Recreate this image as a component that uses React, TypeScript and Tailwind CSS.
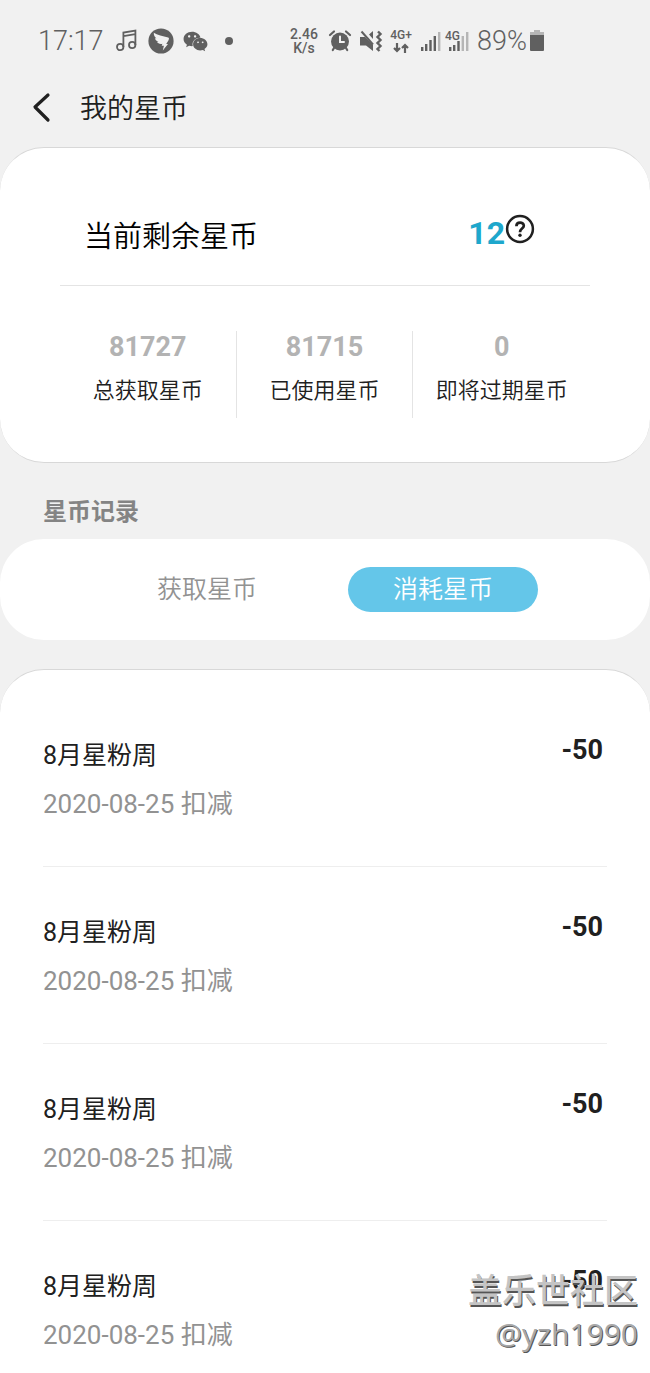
import { useState } from 'react';
import { FaWeixin } from 'react-icons/fa';

type TabId = 'earned' | 'spent';

const TABS: { id: TabId; label: string }[] = [
  { id: 'earned', label: '获取星币' },
  { id: 'spent', label: '消耗星币' }
];

const STATS = [
  { label: '总获取星币', value: 81727 },
  { label: '已使用星币', value: 81715 },
  { label: '即将过期星币', value: 0 }
];

const RECORDS = [
  { id: 1, title: '8月星粉周', date: '2020-08-25', amount: -50 },
  { id: 2, title: '8月星粉周', date: '2020-08-25', amount: -50 },
  { id: 3, title: '8月星粉周', date: '2020-08-25', amount: -50 },
  { id: 4, title: '8月星粉周', date: '2020-08-25', amount: -50 }
];

function MusicIcon() {
  return (
    <svg className="h-6 w-6" viewBox="0 0 24 24" fill="none" stroke="currentColor" strokeWidth="1.8">
      <circle cx="5.2" cy="18" r="3.2" />
      <circle cx="17.2" cy="16" r="3.2" />
      <path d="M8.4 18V3.5L20.4 1.5V16M8.4 7.2L20.4 5.2" />
    </svg>
  );
}

function WingIcon() {
  return (
    <svg className="h-[26px] w-[26px]" viewBox="0 0 26 26">
      <circle cx="13" cy="13" r="12.6" fill="currentColor" />
      <path
        d="M5.8 4.8C9 7 15 8.3 20.2 9.4C21.4 9.8 21 11.2 20.4 12.4L18.2 16.1H20L14.8 22.5L15.9 17.8H13.7L14.4 15.8C12 16.5 9.8 15.5 9 13.8L10.5 13.6C8.5 13 7.4 12 7 10.2L8.4 10.2C6.6 9 5.7 7.2 5.8 4.8Z"
        fill="#f1f1f1"
      />
    </svg>
  );
}

function AlarmIcon() {
  return (
    <svg className="h-6 w-6" viewBox="0 0 24 24" fill="none" stroke="currentColor" strokeLinecap="round">
      <circle cx="12" cy="12.5" r="9" fill="currentColor" stroke="none" />
      <path d="M2 6L6 2.5M22 6L18 2.5M6 19L4.8 21M18 19L19.2 21" strokeWidth="2.2" />
      <path d="M12 7.5V13H16" stroke="#f1f1f1" strokeWidth="2" />
    </svg>
  );
}

function VibrateIcon() {
  return (
    <svg className="h-6 w-6" viewBox="0 0 24 24" fill="none" stroke="currentColor">
      <path d="M1 8H6L14 16V22L7 16.5H1ZM10 5.5L14 2V10Z" fill="currentColor" stroke="none" />
      <path d="M2.5 2.5L14 15.5" strokeWidth="2" />
      <path d="M19 2.5L21.5 5L18.5 8L21.5 11L18.5 14L21.5 17L18.5 20L20.5 22" strokeWidth="2.4" />
    </svg>
  );
}

function DataArrowsIcon() {
  return (
    <svg className="h-[10px] w-4" viewBox="0 0 16 10" fill="none" stroke="currentColor" strokeWidth="2.2">
      <path d="M4 0V8M1 5L4 8L7 5M12 10V2M9 5L12 2L15 5" />
    </svg>
  );
}

function SignalIcon() {
  return (
    <svg className="h-5 w-5" viewBox="0 0 20 20" fill="currentColor">
      <path d="M0 16H2.4V20H0ZM4 13H6.4V20H4ZM8.3 9H10.7V20H8.3ZM12.6 5H15V20H12.6Z" />
      <path d="M17 1H19.4V20H17Z" opacity="0.4" />
    </svg>
  );
}

function SecondSignalIcon() {
  return (
    <svg className="h-5 w-5" viewBox="0 0 20 20" fill="currentColor">
      <path d="M0 16H2.4V20H0ZM4 14H6.4V20H4ZM8.3 10H10.7V20H8.3Z" />
      <path d="M12.6 5H15V20H12.6ZM17 1H19.4V20H17Z" opacity="0.4" />
    </svg>
  );
}

function BatteryIcon() {
  return (
    <svg className="h-[22px] w-4" viewBox="0 0 16 22" fill="currentColor">
      <path d="M5 0H11V2H15V5H1V2H5Z" opacity="0.4" />
      <path d="M1 5H15V20Q15 21 14 21H2Q1 21 1 20Z" />
    </svg>
  );
}

function HelpIcon() {
  return (
    <svg className="h-[30px] w-[30px]" viewBox="0 0 30 30" fill="none" stroke="currentColor">
      <circle cx="15" cy="15" r="12.9" strokeWidth="2.5" />
      <path d="M11.4 12.2C11.4 7.4 18.8 7.4 18.8 11.8C18.8 14.6 15 14.6 15 18.2" strokeWidth="2.7" />
      <circle cx="15" cy="21.3" r="1.7" fill="currentColor" stroke="none" />
    </svg>
  );
}

function StatusBar() {
  return (
    <div className="flex h-20 items-center pt-[2px] pl-[38px] text-[#606060]">
      <span className="w-[77px] text-[27px] font-light">17:17</span>
      <MusicIcon />
      <div className="ml-[9px]">
        <WingIcon />
      </div>
      <FaWeixin className="ml-[9px] h-[25px] w-[25px]" />
      <span className="ml-[17px] h-2 w-2 rounded-full bg-current" />
      <div className="ml-14 flex w-[30px] flex-col items-center text-[14px] leading-[14px] font-medium">
        <span>2.46</span>
        <span>K/s</span>
      </div>
      <div className="ml-[9px] flex gap-[7px]">
        <AlarmIcon />
        <VibrateIcon />
      </div>
      <div className="ml-[7px] flex w-[22px] flex-col items-center gap-px text-[12px] leading-[13px] font-medium">
        <span>4G+</span>
        <DataArrowsIcon />
      </div>
      <div className="ml-[9px]">
        <SignalIcon />
      </div>
      <div className="relative ml-2">
        <SecondSignalIcon />
        <span className="absolute -top-px right-[9px] text-[12px] leading-3 font-medium">4G</span>
      </div>
      <span className="ml-2 text-[27px] font-light">89%</span>
      <div className="ml-[2px]">
        <BatteryIcon />
      </div>
    </div>
  );
}

export default function App() {
  const [activeTab, setActiveTab] = useState<TabId>('spent');

  return (
    <div className="relative min-h-screen overflow-hidden bg-[#f1f1f1] font-['Roboto','Noto_Sans_CJK_SC',sans-serif] text-[#202020]">
      <StatusBar />

      <header className="flex h-[67px] items-start gap-[28px] pt-1 pl-[30px]">
        <button type="button" aria-label="返回" className="flex h-[46px] w-[22px] items-center">
          <svg className="h-8 w-[22px]" viewBox="0 0 22 32" fill="none" stroke="currentColor" strokeWidth="3.2">
            <path d="M18 4L5 16L18 29" strokeLinecap="round" strokeLinejoin="round" />
          </svg>
        </button>
        <h1 className="text-[27px] leading-[50px] font-[350]">我的星币</h1>
      </header>

      <section className="rounded-[44px] border-y border-[#d8d8d8] bg-white px-[60px] pb-11">
        <div className="flex h-[138px] items-center justify-between border-b border-[#e4e4e4] pt-10 pr-[55px] pl-6">
          <h2 className="text-[29px] leading-10 font-[350] text-black">当前剩余星币</h2>
          <div className="flex items-center pb-2">
            <span className="text-[32px] leading-10 font-bold text-[#1ea7cc]">12</span>
            <button type="button" aria-label="星币说明" className="pb-2">
              <HelpIcon />
            </button>
          </div>
        </div>
        <dl className="mt-[45px] grid grid-cols-3 divide-x divide-[#e4e4e4]">
          {STATS.map((stat) => (
            <div key={stat.label} className="flex h-[87px] flex-col-reverse items-center justify-end">
              <dt className="mt-3 text-[22px] leading-8 font-[350] whitespace-nowrap">{stat.label}</dt>
              <dd className="text-[27px] leading-8 font-bold text-[#b3b3b3]">{stat.value}</dd>
            </div>
          ))}
        </dl>
      </section>

      <h2 className="pt-[31px] pb-[9px] pl-[43px] text-[24px] leading-9 font-bold text-[#848484]">星币记录</h2>

      <nav className="flex h-[101px] items-center justify-center gap-[46px] rounded-[44px] bg-white">
        {TABS.map((tab) => (
          <button
            key={tab.id}
            type="button"
            className={`h-[45px] w-[190px] rounded-full text-[25px] font-[350] ${
              tab.id === activeTab ? 'bg-[#64c6e9] text-white' : 'text-[#929292]'
            }`}
            onClick={() => setActiveTab(tab.id)}
          >
            {tab.label}
          </button>
        ))}
      </nav>

      <ul className="mt-[29px] rounded-t-[44px] border-t border-[#d8d8d8] bg-white px-[43px] pt-5">
        {RECORDS.map((record) => (
          <li
            key={record.id}
            className="flex h-[177px] items-start justify-between border-b border-[#eeeeee] pt-[46px] pr-1 last:h-[152px] last:border-b-0"
          >
            <div>
              <p className="text-[25px] leading-10">{record.title}</p>
              <p className="mt-2 text-[26px] leading-10 text-[#929292]">{record.date} 扣减</p>
            </div>
            <span className="text-[27px] leading-7 font-bold">{record.amount}</span>
          </li>
        ))}
      </ul>

      <div className="pointer-events-none absolute right-3 bottom-[18px] text-right text-[#c4c4c4] [text-shadow:1px_2px_0_#555555]">
        <p className="text-[34px] leading-[44px] font-medium">盖乐世社区</p>
        <p className="font-['Open_Sans'] text-[30px] leading-[42px] text-[#a8a8a8] [text-shadow:1px_1px_0_#555555]">@yzh1990</p>
      </div>
    </div>
  );
}
